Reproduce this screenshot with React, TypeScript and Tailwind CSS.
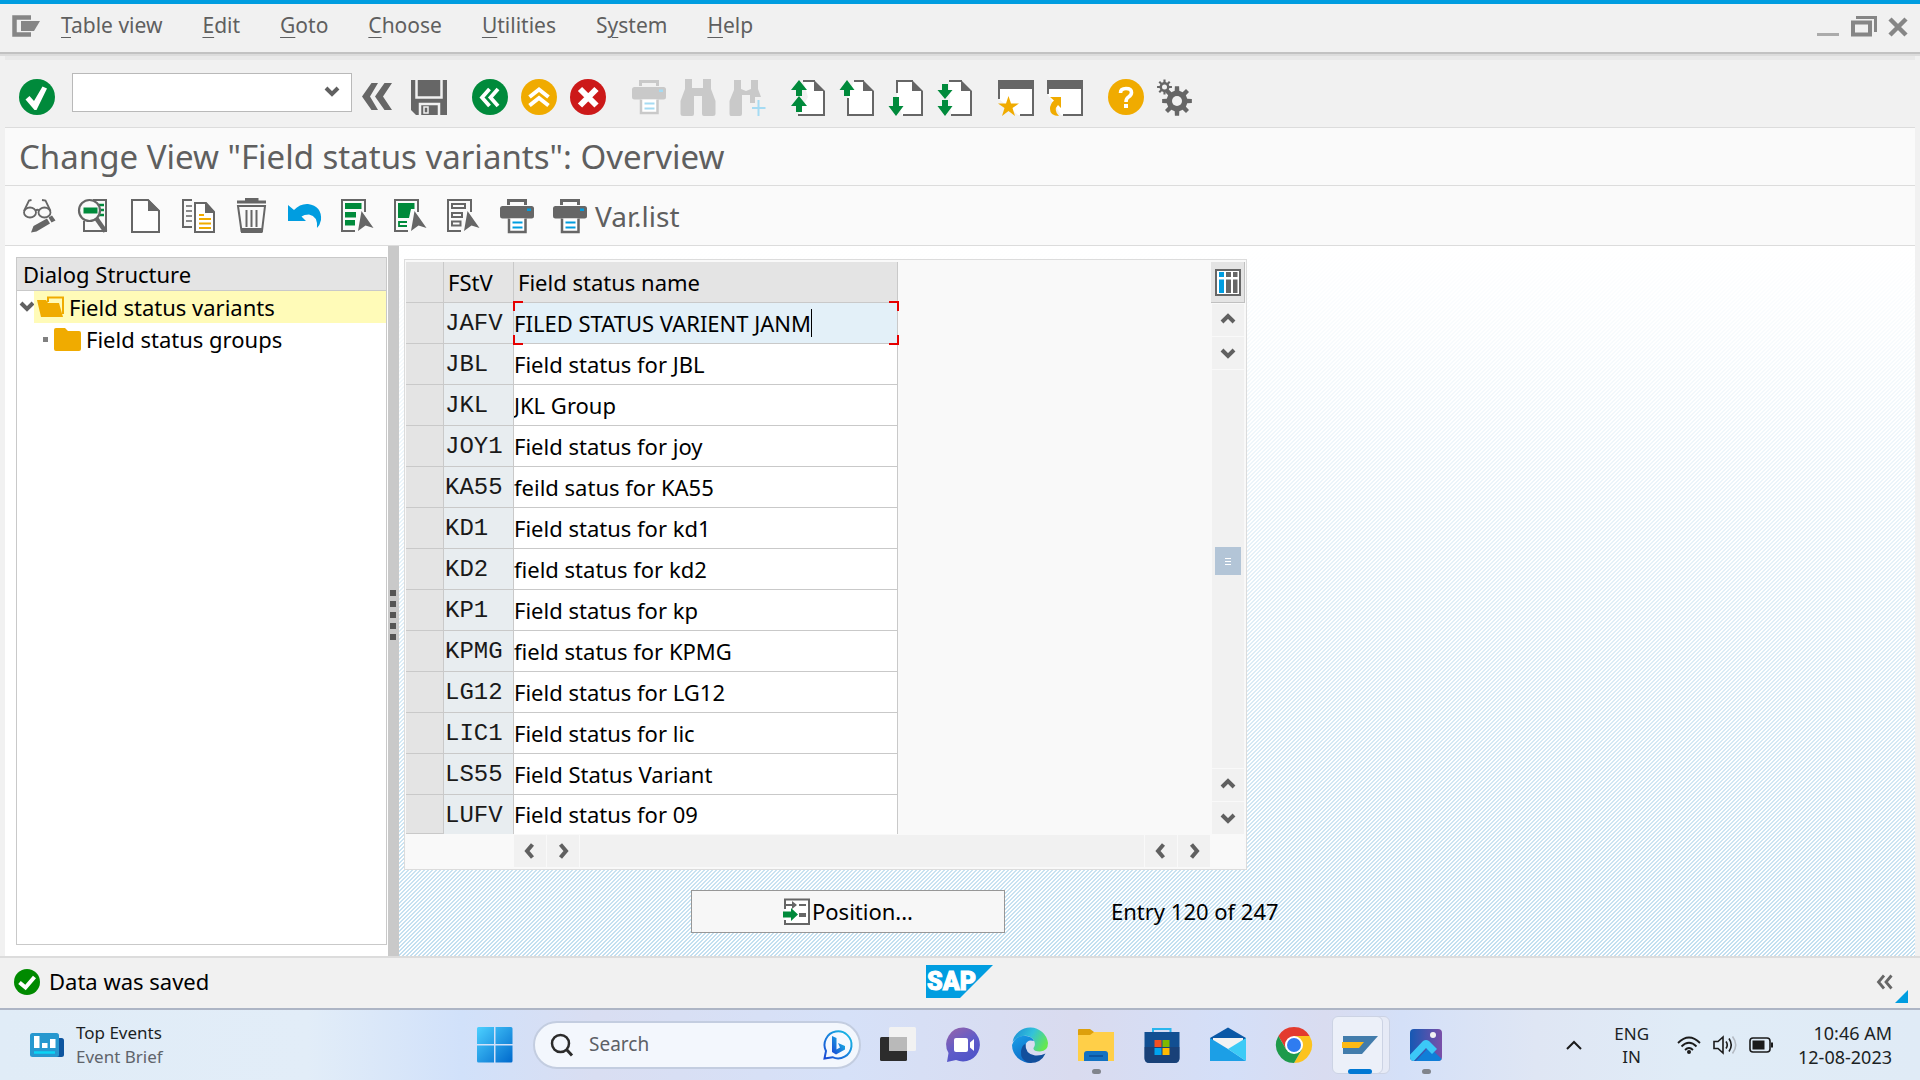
import React from "react";

const GRAY = "#666666";
const GREEN = "#008a3b";
const AMBER = "#f0ab00";
const BLUE = "#009de0";

type KidsProps = { children?: React.ReactNode; w?: number; h?: number };

function Svg({ children, w = 36, h = 36 }: KidsProps) {
  return (
    <svg width={w} height={h} viewBox={`0 0 ${w} ${h}`} className="block shrink-0 overflow-visible" aria-hidden="true">
      {children}
    </svg>
  );
}

function IconButton({ label, children }: { label: string; children: React.ReactNode }) {
  return (
    <button type="button" aria-label={label} className="flex h-9 w-9 shrink-0 items-center justify-center">
      {children}
    </button>
  );
}

/* ---------- icons of the system toolbar ---------- */

function CheckCircle() {
  return (
    <Svg>
      <circle cx="18" cy="18" r="18" fill={GREEN} />
      <path d="M6.5 20.5 L10.5 17 L15 22 L23.5 7.5 L28 9.5 L17.5 31 L15.5 31 Z" fill="#fff" />
    </Svg>
  );
}

function DoubleLeft() {
  return (
    <Svg>
      <path d="M3 17.5 L12.5 4 H19 L11 17.5 L19 31 H12.5 Z M16 17.5 L25.500 4 H33 L24 17.5 L33 31 H25.500 Z" fill={GRAY} />
    </Svg>
  );
}

function Save() {
  return (
    <Svg>
      <path d="M0 1 H36 V36 H5 L0 31 Z" fill={GRAY} />
      <path d="M5.500 1 V18.500 H30.500 V1" fill="none" stroke="#f1f1f1" strokeWidth="2.500" />
      <path d="M9 36 V25 H28 V36" fill="none" stroke="#f1f1f1" strokeWidth="2.500" />
      <rect x="13" y="28" width="4" height="6" fill={GRAY} stroke="#f1f1f1" strokeWidth="1.500" />
    </Svg>
  );
}

function BackCircle() {
  return (
    <Svg>
      <circle cx="18" cy="18" r="18" fill={GREEN} />
      <path d="M17.500 10 L10 18.500 L17.500 27 M26 10 L18.500 18.500 L26 27" fill="none" stroke="#fff" strokeWidth="3.800" />
    </Svg>
  );
}

function UpCircle() {
  return (
    <Svg>
      <circle cx="18" cy="18" r="18" fill={AMBER} />
      <path d="M8.500 18 L18 10.500 L27.500 18 M8.500 26.500 L18 19 L27.500 26.500" fill="none" stroke="#fff" strokeWidth="4" />
    </Svg>
  );
}

function CancelCircle() {
  return (
    <Svg>
      <circle cx="18" cy="18" r="18" fill="#cc1919" />
      <path d="M10 10 L26.500 26.500 M26.500 10 L10 26.500" stroke="#fff" strokeWidth="6" />
    </Svg>
  );
}

function Printer({ dim = false }: { dim?: boolean }) {
  const c = dim ? "#c9c9c9" : GRAY;
  const b = dim ? "#a5dbf3" : BLUE;
  return (
    <Svg>
      <path d="M9.500 7 V2.500 H26.500 V7" fill="none" stroke={c} strokeWidth="3" />
      <rect x="1" y="8" width="34" height="12.500" rx="2.500" fill={c} />
      <rect x="28" y="10.500" width="4" height="2.500" fill={b} />
      <path d="M10 20.500 V34 H26.500 V20.500" fill="#fff" stroke={c} strokeWidth="2.500" />
      <path d="M13.500 24.500 H23.500 M13.500 29.500 H23.500" stroke={b} strokeWidth="2" />
    </Svg>
  );
}

function Binoculars() {
  return (
    <Svg>
      <path d="M5 0 H12 V9 H23 V0 H31 V10 L35.500 22 V35 Q35.500 37 33 37 H24 Q22 37 22 35 V17 H14 V35 Q14 37 12 37 H3 Q0.500 37 0.500 35 V22 L5 10 Z" fill="#c9c9c9" />
    </Svg>
  );
}

function BinocularsPlus() {
  return (
    <Svg>
      <path d="M5 1 H12 V10 L17 12 L22 10 V1 H29 V10 L32 18 H26 V24 H21 V16 H13 V35 Q13 37 11 37 H2 Q0.500 37 0.500 35 V22 L5 11 Z" fill="#c9c9c9" />
      <path d="M29.500 21 V37 M23 29 H36.500" stroke="#a5dbf3" strokeWidth="2" />
    </Svg>
  );
}

function Fold() {
  return <path d="M24 1 L35 12 H24 Z" fill={GRAY} />;
}

function FirstPage() {
  return (
    <Svg>
      <path d="M13 2 H24 L34 12 V36 H8 L18 18 Z" fill="#fff" />
      <path d="M13 2 H25 M34 12 V36 H8" fill="none" stroke={GRAY} strokeWidth="2" />
      <Fold />
      <path d="M9 1 L17 11 H12 V17 H6 V11 H1 Z M9 17 L17 27 H12 V33 H6 V27 H1 Z" fill={GREEN} />
    </Svg>
  );
}

function PrevPage() {
  return (
    <Svg>
      <path d="M15 2 H24 L34 12 V36 H9 V18 Z" fill="#fff" />
      <path d="M15 2 H25 M34 12 V36 H9 V19" fill="none" stroke={GRAY} strokeWidth="2" />
      <Fold />
      <path d="M8 1 L15.500 11 H11 V17 H5 V11 H0.500 Z" fill={GREEN} />
    </Svg>
  );
}

function NextPage() {
  return (
    <Svg>
      <path d="M9 2 H24 L34 12 V36 H14 L9 18 Z" fill="#fff" />
      <path d="M9 14 V2 H25 M34 12 V36 H15" fill="none" stroke={GRAY} strokeWidth="2" />
      <Fold />
      <path d="M8 37 L15.500 27 H11 V18 H5 V27 H0.500 Z" fill={GREEN} />
    </Svg>
  );
}

function LastPage() {
  return (
    <Svg>
      <path d="M12 2 H24 L34 12 V36 H14 Z" fill="#fff" />
      <path d="M12 2 H25 M34 12 V36 H14" fill="none" stroke={GRAY} strokeWidth="2" />
      <Fold />
      <path d="M8 20 L15.500 11 H11 V5 H5 V11 H0.500 Z M8 37 L15.500 27 H11 V21 H5 V27 H0.500 Z" fill={GREEN} />
    </Svg>
  );
}

function NewSession() {
  return (
    <Svg>
      <path d="M1 2 H35 V36 H20 L1 20 Z" fill="#fff" />
      <path d="M1 20 V2 H35 V36 H22" fill="none" stroke={GRAY} strokeWidth="2" />
      <rect x="0" y="1" width="36" height="9" fill={GRAY} />
      <path d="M10.500 17 L13 24.500 H21 L14.500 29 L17 37 L10.500 32 L4 37 L6.500 29 L0 24.500 H8 Z" fill={AMBER} />
    </Svg>
  );
}

function Shortcut() {
  return (
    <Svg>
      <path d="M1 2 H35 V36 H14 L1 16 Z" fill="#fff" />
      <path d="M1 15 V2 H35 V36 H16" fill="none" stroke={GRAY} strokeWidth="2" />
      <rect x="0" y="1" width="36" height="9" fill={GRAY} />
      <path d="M3 18 H14 V29 L11 26 Q6 31 12 37 Q3 37 3 30 Q3 25 7 21.500 Z" fill={AMBER} />
    </Svg>
  );
}

function HelpCircle() {
  return (
    <Svg>
      <circle cx="18" cy="18" r="18" fill={AMBER} />
      <path d="M12.500 14 Q12.500 9.500 18 9.500 Q23.500 9.500 23.500 13.500 Q23.500 16 20.500 18 Q18 19.500 18 23" fill="none" stroke="#fff" strokeWidth="3.600" />
      <rect x="16" y="25" width="4" height="4" fill="#fff" />
    </Svg>
  );
}

function gearPath(cx: number, cy: number, outer: number, inner: number, teeth: number) {
  const pts: string[] = [];
  const step = (Math.PI * 2) / teeth;
  for (let i = 0; i < teeth; i++) {
    const a = i * step - Math.PI / 2;
    const corners: [number, number][] = [
      [a - step * 0.28, inner],
      [a - step * 0.18, outer],
      [a + step * 0.18, outer],
      [a + step * 0.28, inner],
    ];
    for (const [t, r] of corners) pts.push(`${(cx + Math.cos(t) * r).toFixed(2)},${(cy + Math.sin(t) * r).toFixed(2)}`);
  }
  return `M${pts.join(" L")} Z`;
}

function Gears() {
  return (
    <Svg>
      <path d={gearPath(20, 22, 15, 10.5, 8)} fill={GRAY} />
      <circle cx="20" cy="22" r="5" fill="#f1f1f1" />
      <path d={gearPath(7.5, 8, 7.5, 5, 8)} fill={GRAY} />
      <circle cx="7.500" cy="8" r="2.500" fill="#f1f1f1" />
    </Svg>
  );
}

/* ---------- icons of the application toolbar ---------- */

function GlassesPencil() {
  return (
    <Svg>
      <g fill="none" stroke={GRAY} strokeWidth="1.800">
        <ellipse cx="8" cy="14.500" rx="6" ry="5" />
        <ellipse cx="22.500" cy="14.500" rx="6" ry="5" />
        <path d="M13.500 12.500 Q15.500 11 17 12.500 M2 13 L7 2.500 L9.500 2 M28.500 13 L23.500 2.500 L20 2" />
      </g>
      <path d="M9 34.500 L11.500 28 L25 20.500 L28 25.500 L14.500 33.500 Z M26.500 19.500 L30 17.500 L33.500 22.500 L29.500 24.500 Z" fill={GRAY} />
    </Svg>
  );
}

function FindPage() {
  return (
    <Svg>
      <path d="M18 2 H31 V33 H9 V23" fill="none" stroke={GRAY} strokeWidth="2" />
      <path d="M24 7 H29 M25 12 H29 M24 17 H29" stroke={GREEN} strokeWidth="2.500" />
      <circle cx="14.500" cy="12.500" r="10.500" fill="#fafafa" stroke={GRAY} strokeWidth="2.200" />
      <rect x="8.500" y="9.500" width="14" height="6" fill={GREEN} />
      <path d="M21 20 L30.500 33.500" stroke={GRAY} strokeWidth="4.500" />
    </Svg>
  );
}

function NewPage() {
  return (
    <Svg>
      <path d="M4 2 H20 L31 13 V34 H4 Z" fill="#fdfdfd" stroke={GRAY} strokeWidth="2" />
      <path d="M20 1 L32 13 H20 Z" fill={GRAY} />
    </Svg>
  );
}

function CopyPages() {
  return (
    <Svg>
      <path d="M11 2 H2 V29 H11" fill="none" stroke={GRAY} strokeWidth="2" />
      <path d="M5 8 H11 M5 13 H11 M5 18 H11 M5 23 H11" stroke={GRAY} strokeWidth="1.600" />
      <path d="M14 5 H25 L33 14 V34 H14 Z" fill="#fff" stroke={GRAY} strokeWidth="2" />
      <path d="M24 4 L34 15 H24 Z" fill={GRAY} />
      <path d="M18 17 H23 M18 21 H30 M18 25.500 H30 M18 30 H30" stroke={AMBER} strokeWidth="2" />
    </Svg>
  );
}

function Trash() {
  return (
    <Svg>
      <path d="M3 4 H32 M12.500 3 V1.500 H23 V3" fill="none" stroke={GRAY} strokeWidth="3" />
      <path d="M4 8 H31 L28 33 H7.500 Z" fill="none" stroke={GRAY} strokeWidth="2" />
      <path d="M12.500 12 V29 M17.500 12 V29 M22.500 12 V29" stroke={GRAY} strokeWidth="2" />
      <rect x="7" y="30" width="21.500" height="5" fill={GRAY} />
    </Svg>
  );
}

function Undo() {
  return (
    <Svg>
      <path d="M1 7 L7 12 Q13 5.500 21 6 Q35 8 34 22 Q33 27 30 30 Q31 18 22 16.500 Q17 16.500 14.500 18.500 L19 23 H1 Z" fill={BLUE} />
    </Svg>
  );
}

function Cursor() {
  return <path d="M21.500 13 L33.500 30 L25.500 27.500 L18 33 Z" fill={GRAY} />;
}

function SelectAll() {
  return (
    <Svg>
      <path d="M25 14 V2 H2 V33 H15" fill="none" stroke={GRAY} strokeWidth="2" />
      <path d="M5 5 H21.500 V11 H5 Z M5 14 H16 V19.500 H5 Z M5 22 H15 V27.500 H5 Z" fill={GREEN} />
      <Cursor />
    </Svg>
  );
}

function SelectBlock() {
  return (
    <Svg>
      <path d="M25 14 V2 H2 V33 H15" fill="none" stroke={GRAY} strokeWidth="2" />
      <path d="M5 5 H21.500 V11 H18 L16 20 H5 Z" fill={GREEN} />
      <path d="M14 24 H6 V28 H14" fill="none" stroke={GREEN} strokeWidth="1.800" />
      <Cursor />
    </Svg>
  );
}

function DeselectAll() {
  return (
    <Svg>
      <path d="M25 14 V2 H2 V33 H15" fill="none" stroke={GRAY} strokeWidth="2" />
      <path d="M6 6 H19 V10 H6 Z M6 15 H16 V19 H6 Z M6 23.500 H14.500 V27.500 H6 Z" fill="none" stroke={GRAY} strokeWidth="2" />
      <Cursor />
    </Svg>
  );
}

/* ---------- small shared glyphs ---------- */

function Chevron({ dir }: { dir: "up" | "down" | "left" | "right" }) {
  const d = {
    up: "M1 9 L7 3 L13 9",
    down: "M1 4 L7 10 L13 4",
    left: "M9.500 0.500 L4 7 L9.500 13.500",
    right: "M4.500 0.500 L10 7 L4.500 13.500",
  }[dir];
  return (
    <Svg w={14} h={14}>
      <path d={d} fill="none" stroke="#606060" strokeWidth="4" />
    </Svg>
  );
}

function ScrollButton({ dir, label }: { dir: "up" | "down" | "left" | "right"; label: string }) {
  return (
    <button type="button" aria-label={label} className="flex h-8 w-8 shrink-0 items-center justify-center bg-[#f1f1f1]">
      <Chevron dir={dir} />
    </button>
  );
}

/* ---------- data ---------- */

const menus: [string, string, string][] = [
  ["", "T", "able view"],
  ["", "E", "dit"],
  ["", "G", "oto"],
  ["", "C", "hoose"],
  ["", "U", "tilities"],
  ["S", "y", "stem"],
  ["", "H", "elp"],
];

const rows: [string, string][] = [
  ["JAFV", "FILED STATUS VARIENT JANM"],
  ["JBL", "Field status for JBL"],
  ["JKL", "JKL Group"],
  ["JOY1", "Field status for joy"],
  ["KA55", "feild satus for KA55"],
  ["KD1", "Field status for kd1"],
  ["KD2", "field status for kd2"],
  ["KP1", "Field status for kp"],
  ["KPMG", "field status for KPMG"],
  ["LG12", "Field status for LG12"],
  ["LIC1", "Field status for lic"],
  ["LS55", "Field Status Variant"],
  ["LUFV", "Field status for 09"],
];

/* ---------- page sections ---------- */

function MenuBar() {
  return (
    <header className="flex h-12 items-center bg-[#f1f1f1] pr-[13px] pb-1 pl-3">
      <button type="button" aria-label="Window menu">
        <Svg w={28} h={22}>
          <path d="M19 2.500 H2.500 V19.500 H19" fill="none" stroke="#868686" strokeWidth="4.500" />
          <path d="M9 6 H28 L22 16 H9 Z" fill="#868686" />
        </Svg>
      </button>
      <nav className="ml-[21px] flex gap-10 text-[21px] text-[#5f5f5f]">
        {menus.map(([a, b, c]) => (
          <button type="button" key={b + c}>
            {a}
            <span className="underline decoration-1 underline-offset-4">{b}</span>
            {c}
          </button>
        ))}
      </nav>
      <div className="ml-auto flex items-center gap-3">
        <button type="button" aria-label="Minimize">
          <Svg w={22} h={22}>
            <rect x="0" y="18" width="22" height="3" fill="#ababab" />
          </Svg>
        </button>
        <button type="button" aria-label="Restore">
          <Svg w={26} h={22}>
            <path d="M5 2.500 H24.500 V17" fill="none" stroke="#868686" strokeWidth="3" />
            <rect x="2" y="7.500" width="17" height="12" fill="none" stroke="#868686" strokeWidth="4" />
          </Svg>
        </button>
        <button type="button" aria-label="Close" className="pt-0.5">
          <Svg w={18} h={18}>
            <path d="M1 1 L17 17 M17 1 L1 17" stroke="#868686" strokeWidth="4.500" />
          </Svg>
        </button>
      </div>
    </header>
  );
}

function SystemToolbar() {
  return (
    <div className="flex h-[67px] items-center gap-[25px] pt-[7px] pl-[14px]">
      <div className="flex items-center">
        <IconButton label="Enter"><CheckCircle /></IconButton>
        <div className="relative mr-[7px] mb-2.5 ml-[17px] h-[39px] w-[280px] border border-[#b9b9b9] bg-white">
          <input aria-label="Command" className="h-full w-full bg-transparent px-2 pr-9 text-[22px] outline-none" />
          <button type="button" aria-label="Command history" className="absolute top-2.5 right-3">
            <Chevron dir="down" />
          </button>
        </div>
        <IconButton label="Close command field"><DoubleLeft /></IconButton>
        <span className="w-4" />
        <IconButton label="Save"><Save /></IconButton>
      </div>
      <div className="flex gap-[13px]">
        <IconButton label="Back"><BackCircle /></IconButton>
        <IconButton label="Exit"><UpCircle /></IconButton>
        <IconButton label="Cancel"><CancelCircle /></IconButton>
      </div>
      <div className="flex gap-[13px]">
        <IconButton label="Print"><Printer dim /></IconButton>
        <IconButton label="Find"><Binoculars /></IconButton>
        <IconButton label="Find next"><BinocularsPlus /></IconButton>
      </div>
      <div className="flex gap-[13px]">
        <IconButton label="First page"><FirstPage /></IconButton>
        <IconButton label="Previous page"><PrevPage /></IconButton>
        <IconButton label="Next page"><NextPage /></IconButton>
        <IconButton label="Last page"><LastPage /></IconButton>
      </div>
      <div className="flex gap-[13px]">
        <IconButton label="New session"><NewSession /></IconButton>
        <IconButton label="Create shortcut"><Shortcut /></IconButton>
      </div>
      <div className="flex gap-[13px]">
        <IconButton label="Help"><HelpCircle /></IconButton>
        <IconButton label="Customize layout"><Gears /></IconButton>
      </div>
    </div>
  );
}

function AppToolbar() {
  return (
    <div className="flex h-[60px] items-center gap-[17px] border-b border-[#dcdcdc] bg-[#fafafa] pl-[17px]">
      <IconButton label="Display / change"><GlassesPencil /></IconButton>
      <IconButton label="Details"><FindPage /></IconButton>
      <IconButton label="New entries"><NewPage /></IconButton>
      <IconButton label="Copy as"><CopyPages /></IconButton>
      <IconButton label="Delete"><Trash /></IconButton>
      <IconButton label="Undo change"><Undo /></IconButton>
      <IconButton label="Select all"><SelectAll /></IconButton>
      <IconButton label="Select block"><SelectBlock /></IconButton>
      <IconButton label="Deselect all"><DeselectAll /></IconButton>
      <IconButton label="Print"><Printer /></IconButton>
      <button type="button" className="flex items-center gap-[7px] text-[28px] text-[#5f5f5f]">
        <Printer />
        Var.list
      </button>
    </div>
  );
}

function DialogStructure() {
  return (
    <aside className="flex w-[383px] shrink-0 flex-col bg-white pt-[11px] pr-px pb-[11px] pl-[11px] text-[22px]">
      <div className="flex flex-1 flex-col border border-[#c9c9c9]">
        <h2 className="h-[33px] border-b border-[#c9c9c9] bg-[#e4e4e4] pl-1.5 leading-[32px]">Dialog Structure</h2>
        <ul>
          <li className="flex h-8">
            <button type="button" aria-label="Collapse" className="flex w-[17px] shrink-0 justify-end pt-2">
              <Chevron dir="down" />
            </button>
            <button type="button" className="flex flex-1 items-center gap-1 bg-[#fffbb8] pl-[3px]">
              <Svg w={28} h={22}>
                <path d="M11 6 V1.500 H26 V18" fill="none" stroke={AMBER} strokeWidth="2" />
                <path d="M0 4 H9 L11 7 H22 L26 21 H4 Z" fill={AMBER} />
              </Svg>
              Field status variants
            </button>
          </li>
          <li className="flex h-8 items-center pl-[26px]">
            <span className="mr-1.5 h-[5px] w-[5px] bg-[#808080]" />
            <button type="button" className="flex items-center gap-[5px]">
              <Svg w={27} h={23}>
                <path d="M0 2 Q0 0 2 0 H11 L14 3 H25 Q27 3 27 5 V21 Q27 23 25 23 H2 Q0 23 0 21 Z" fill={AMBER} />
              </Svg>
              Field status groups
            </button>
          </li>
        </ul>
      </div>
    </aside>
  );
}

function Splitter() {
  return (
    <div className="flex w-[11px] shrink-0 flex-col items-center justify-center gap-[5px] bg-[#c9c9c9] pt-7 pr-0.5">
      {[0, 1, 2, 3, 4].map((i) => (
        <span key={i} className="h-1.5 w-1.5 bg-[#555555]" />
      ))}
    </div>
  );
}

function VariantTable() {
  return (
    <table className="w-[492px] shrink-0 table-fixed border-separate border-spacing-0 text-left text-[22px]">
      <colgroup>
        <col className="w-[38px]" />
        <col className="w-[70px]" />
        <col />
      </colgroup>
      <thead>
        <tr className="h-[41px] bg-[#e4e4e4]">
          <th aria-label="Select" className="border-r border-b border-[#c9c9c9]" />
          <th className="border-r border-b border-[#c9c9c9] p-0 pl-1 font-normal">FStV</th>
          <th className="border-r border-b border-[#c9c9c9] p-0 pl-1 font-normal">Field status name</th>
        </tr>
      </thead>
      <tbody>
        {rows.map(([code, name], i) => (
          <tr key={code} className="group h-[41px] last:h-[39px]">
            <td className="border-r border-b border-[#c9c9c9] bg-[#e4e4e4] p-0" />
            <td className="border-r border-b border-[#c9c9c9] bg-[#e8edf0] p-0 pt-0.5 pl-px font-['Liberation_Mono',monospace] text-[24px] leading-8 text-[#1a1a1a] group-last:border-b-0">
              {code}
            </td>
            {i === 0 ? (
              <td className="relative border-r border-b border-[#c9c9c9] bg-[#e3f0f8] p-0">
                <span className="absolute -top-0.5 -left-px h-2.5 w-2.5 border-t-2 border-l-2 border-[#e60000]" />
                <span className="absolute -top-0.5 -right-0.5 h-2.5 w-2.5 border-t-2 border-r-2 border-[#e60000]" />
                <span className="absolute -bottom-0.5 -left-px h-2.5 w-2.5 border-b-2 border-l-2 border-[#e60000]" />
                <span className="absolute -right-0.5 -bottom-0.5 h-2.5 w-2.5 border-r-2 border-b-2 border-[#e60000]" />
                <div className="flex items-center">
                  <input aria-label={`Name of ${code}`} defaultValue={name} className="h-8 bg-transparent outline-none [field-sizing:content]" />
                  <span className="h-7 w-px bg-black" />
                </div>
              </td>
            ) : (
              <td className="border-r border-b border-[#c9c9c9] bg-white p-0 group-last:border-b-0">
                <input aria-label={`Name of ${code}`} defaultValue={name} className="block h-8 w-full bg-transparent outline-none" />
              </td>
            )}
          </tr>
        ))}
      </tbody>
    </table>
  );
}

function TablePanel() {
  return (
    <section className="w-[843px] border border-[#dcdcdc] bg-[#f9f9f9] pt-0.5 pb-0.5 pl-px">
      <div className="flex justify-between">
        <VariantTable />
        <div className="mr-px flex flex-col items-center gap-px">
          <button type="button" aria-label="Configuration" className="flex h-[41px] w-[34px] items-center justify-center border-r border-b border-[#c0c0c0] bg-[#e4e4e4]">
            <Svg w={26} h={27}>
              <rect x="1" y="1" width="24" height="25" fill="#fff" stroke={GRAY} strokeWidth="2" />
              <path d="M4 3 H9 V8 H4 Z M4 10.500 H9 V24 H4 Z" fill={BLUE} />
              <path d="M11 3 H16 V8 H11 Z M11 10.500 H16 V24 H11 Z M18 3 H22.500 V8 H18 Z M18 10.500 H22.500 V24 H18 Z" fill={GRAY} />
            </Svg>
          </button>
          <ScrollButton dir="up" label="Page up" />
          <ScrollButton dir="down" label="Scroll down" />
          <div className="flex w-8 flex-1 flex-col items-center bg-[#f1f1f1] pt-[177px]">
            <div className="flex h-7 w-[26px] flex-col items-center justify-center gap-0.5 bg-[#b3c5d7]">
              <span className="h-px w-1.5 bg-white" />
              <span className="h-px w-1.5 bg-white" />
              <span className="h-px w-1.5 bg-white" />
            </div>
          </div>
          <ScrollButton dir="up" label="Scroll up" />
          <ScrollButton dir="down" label="Page down" />
        </div>
      </div>
      <div className="mt-px mr-9 ml-[108px] flex gap-px">
        <ScrollButton dir="left" label="Page left" />
        <ScrollButton dir="right" label="Scroll right" />
        <div className="flex-1 bg-[#f1f1f1]" />
        <ScrollButton dir="left" label="Scroll left" />
        <ScrollButton dir="right" label="Page right" />
      </div>
    </section>
  );
}

function Workspace() {
  return (
    <main className="relative flex-1 bg-[linear-gradient(135deg,#c2dff0_25%,#ffffff_25%,#ffffff_50%,#c2dff0_50%,#c2dff0_75%,#ffffff_75%)] bg-[length:4px_4px]">
      <div className="h-full bg-[linear-gradient(180deg,#ffffff_0%,rgba(255,255,255,0)_100%)] pt-[13px] pl-[5px]">
        <TablePanel />
        <div className="mt-5 flex items-center pl-[287px] text-[22px]">
          <button type="button" className="flex h-[43px] w-[314px] items-center justify-center gap-0.5 border border-[#979797] bg-[#f7f7f7]">
            <Svg w={27} h={28}>
              <path d="M2 11 V1.500 H26 V26 H2 V22" fill="#fff" stroke={GRAY} strokeWidth="2" />
              <path d="M3 7 H13 M16 7 H23 M16 17 H23" fill="none" stroke={GRAY} strokeWidth="2" />
              <path d="M9 3 L14 7 L9 11 Z M16 15 H23 V19 H16 Z" fill={GRAY} />
              <path d="M0 13.500 H8 V10 L15 16.500 L8 23 V19.500 H0 Z" fill={GREEN} />
            </Svg>
            Position...
          </button>
          <p className="ml-[106px]">Entry 120 of 247</p>
        </div>
      </div>
    </main>
  );
}

function StatusBar() {
  return (
    <footer className="relative grid h-[52px] grid-cols-[1fr_auto_1fr] items-center border-t-2 border-[#dcdcdc] bg-[#f1f1f1] pr-[3px] pb-[3px] pl-3.5 text-[22px]">
      <p className="flex items-center gap-[9px]">
        <Svg w={26} h={26}>
          <circle cx="13" cy="13" r="13" fill="#008a00" />
          <path d="M5.500 13.500 L11.500 18.500 L20.500 8" fill="none" stroke="#fff" strokeWidth="4" />
        </Svg>
        Data was saved
      </p>
      <div className="mr-3">
        <Svg w={67} h={33}>
          <path d="M0 0 H67 L34 33 H0 Z" fill={BLUE} />
          <text x="1" y="25" fontFamily="Roboto, sans-serif" fontWeight="900" fontSize="25" fill="#fff" stroke="#fff" strokeWidth="1">
            SAP
          </text>
        </Svg>
      </div>
      <button type="button" aria-label="Show system information" className="mr-6 justify-self-end">
        <Svg w={16} h={14}>
          <path d="M7 0.500 L1.500 7 L7 13.500 M14.500 0.500 L9 7 L14.500 13.500" fill="none" stroke={GRAY} strokeWidth="2.800" />
        </Svg>
      </button>
      <span className="absolute right-3 bottom-[5px] h-[13px] w-[13px] bg-[#009de0] [clip-path:polygon(100%_0,100%_100%,0_100%)]" />
    </footer>
  );
}

/* ---------- desktop taskbar ---------- */

function TaskButton({ label, children, running = false }: { label: string; children: React.ReactNode; running?: boolean }) {
  return (
    <button type="button" aria-label={label} className="relative flex h-[58px] w-14 shrink-0 items-center justify-center">
      {children}
      {running && <span className="absolute bottom-0 h-[5px] w-[9px] rounded-full bg-[#80848c]" />}
    </button>
  );
}

function StartLogo() {
  return (
    <Svg w={36} h={36}>
      <defs>
        <linearGradient id="start" x1="0" y1="0" x2="1" y2="1">
          <stop offset="0" stopColor="#4cd0ff" />
          <stop offset="1" stopColor="#0069cc" />
        </linearGradient>
      </defs>
      <path d="M1.500 0 H17 V17 H0 V1.500 Q0 0 1.500 0 Z M18.500 0 H34 Q35.500 0 35.500 1.500 V17 H18.500 Z M0 18.500 H17 V35.500 H1.500 Q0 35.500 0 34 Z M18.500 18.500 H35.500 V34 Q35.500 35.500 34 35.500 H18.500 Z" fill="url(#start)" />
    </Svg>
  );
}

function BingLogo() {
  return (
    <Svg w={30} h={30}>
      <defs>
        <linearGradient id="bing" x1="1" y1="0" x2="0" y2="1">
          <stop offset="0" stopColor="#19c3e6" />
          <stop offset="1" stopColor="#1a48d4" />
        </linearGradient>
      </defs>
      <path d="M1.500 28.500 L3 21 A13.500 13.500 0 1 1 9.500 27.200 Z" fill="#f5f9ff" stroke="url(#bing)" strokeWidth="2" />
      <path d="M9 6 L13.500 8 V19.500 L17 17.500 L15 13 L22 16 V19.500 L13 24.500 L9 22 Z" fill="url(#bing)" />
    </Svg>
  );
}

function TaskViewIcon() {
  return (
    <Svg>
      <rect x="0" y="10" width="27" height="24" rx="1.500" fill="#2c2c2c" />
      <rect x="9" y="0" width="27" height="24" rx="1.500" fill="#f2f2f2" />
      <path d="M9 10 H27 V24 H10.500 Q9 24 9 22.500 Z" fill="#b9b9b9" />
    </Svg>
  );
}

function ChatIcon() {
  return (
    <Svg>
      <defs>
        <linearGradient id="chat" x1="0" y1="0" x2="0.600" y2="1">
          <stop offset="0" stopColor="#9a64a8" />
          <stop offset="0.600" stopColor="#5f5bc9" />
          <stop offset="1" stopColor="#5054c8" />
        </linearGradient>
      </defs>
      <path d="M18 0.500 A17 17 0 1 1 10 33 L1 35 L2.500 26 A17 17 0 0 1 18 0.500 Z" fill="url(#chat)" />
      <rect x="8" y="11" width="14" height="14" rx="2" fill="#fff" />
      <path d="M24 15.500 L28 12 V24 L24 20.500 Z" fill="#fff" />
    </Svg>
  );
}

function EdgeIcon() {
  return (
    <Svg>
      <defs>
        <linearGradient id="edge-top" x1="0" y1="0.200" x2="1" y2="0.600">
          <stop offset="0" stopColor="#1c8fd6" />
          <stop offset="0.500" stopColor="#33c2da" />
          <stop offset="1" stopColor="#66e84e" />
        </linearGradient>
        <linearGradient id="edge-left" x1="0" y1="0" x2="0.500" y2="1">
          <stop offset="0" stopColor="#1aa0e8" />
          <stop offset="1" stopColor="#0d6cc8" />
        </linearGradient>
      </defs>
      <path d="M0.500 15 A18 18 0 0 1 36 16 Q36 24 28 24.500 Q21 24.500 21.500 21 Q24 18 22 13.500 Q18 8 11 9 Q4 10 0.500 15 Z" fill="url(#edge-top)" />
      <path d="M0 18 Q3 9 12 8.800 Q20 9 22 14 Q15 12 13.500 18 Q12 27 20 35.800 A18 18 0 0 1 0 18 Z" fill="url(#edge-left)" />
      <path d="M13.500 17 Q13 27 23 28.500 Q29 29 33.500 26.500 Q29 36 18.500 36 Q8 34 9 24 Q10 18 13.500 17 Z" fill="#124f9c" />
    </Svg>
  );
}

function FolderIcon() {
  return (
    <Svg>
      <path d="M0 3 Q0 2 1 2 H12 L16 5 H35 Q36 5 36 6 V12 H0 Z" fill="#dda00c" />
      <path d="M0 8 H12 L16 5 H36 V34 H0 Z" fill="#ffcf48" />
      <path d="M6 34 V27 Q6 24 9 24 H27 Q30 24 30 27 V34 Z" fill="#1271c2" />
      <path d="M11 29 H25" stroke="#0b4d94" strokeWidth="1.500" />
    </Svg>
  );
}

function StoreIcon() {
  return (
    <Svg>
      <path d="M9 7 V2 H26.500 V7" fill="none" stroke="#29b6ee" strokeWidth="2" />
      <path d="M0.500 5 H35.500 V31 Q35.500 36 30.500 36 H5.500 Q0.500 36 0.500 31 Z" fill="#114f92" />
      <path d="M0.500 20 H35.500 V31 Q35.500 36 30.500 36 H5.500 Q0.500 36 0.500 31 Z" fill="#1c3c6e" opacity="0.700" />
      <rect x="10.500" y="13" width="7" height="7" fill="#f25022" />
      <rect x="18.500" y="13" width="7" height="7" fill="#7fba00" />
      <rect x="10.500" y="21" width="7" height="7" fill="#00a4ef" />
      <rect x="18.500" y="21" width="7" height="7" fill="#ffb900" />
    </Svg>
  );
}

function MailIcon() {
  return (
    <Svg>
      <path d="M0 11 L18 0.500 L36 11 V16 H0 Z" fill="#0a58a6" />
      <path d="M3 11 H33 V18 L18 25 L3 18 Z" fill="#f3f3f3" />
      <path d="M0 11 L18 22 L36 34 H0 Z" fill="#1c9fe6" />
      <path d="M36 11 L18 22 L36 34 Z" fill="#3ccbf6" />
    </Svg>
  );
}

function ChromeIcon() {
  return (
    <Svg>
      <path d="M2.400 9 A18 18 0 0 1 33.600 9 H18 L10.200 22.500 Z" fill="#e33b2e" />
      <path d="M33.600 9 A18 18 0 0 1 18 36 L25.800 22.500 L18 9 Z" fill="#fcc31e" />
      <path d="M18 36 A18 18 0 0 1 2.400 9 L10.200 22.500 L25.800 22.500 Z" fill="#1e9a4b" />
      <circle cx="18" cy="18" r="9" fill="#fff" />
      <circle cx="18" cy="18" r="7" fill="#2f7cf0" />
    </Svg>
  );
}

function PhotosIcon() {
  return (
    <Svg w={32} h={32}>
      <defs>
        <linearGradient id="photos" x1="0" y1="0.500" x2="1" y2="0.500">
          <stop offset="0" stopColor="#1559b4" />
          <stop offset="1" stopColor="#7a4fa8" />
        </linearGradient>
        <clipPath id="photos-clip">
          <rect width="32" height="32" rx="4" />
        </clipPath>
      </defs>
      <g clipPath="url(#photos-clip)">
        <rect width="32" height="32" fill="url(#photos)" />
        <path d="M4 34 L19 18 L34 32 V34 Z" fill="#0f7ed8" />
        <path d="M-2 28 L13 12 Q16 10 19 12 L27 20 L22 25 L16 19 L2 34 Z" fill="#3cc8f7" />
        <circle cx="23" cy="6" r="3" fill="#f2f2f2" />
      </g>
    </Svg>
  );
}

function Taskbar() {
  return (
    <div className="grid h-[72px] grid-cols-[1fr_auto_1fr] items-center border-t-2 border-[#adb5c5] bg-[linear-gradient(90deg,#e0ecf7_0%,#e2edf8_16%,#d1e1fa_24%,#d9def2_31%,#d6e1f8_44%,#d9dbef_56%,#d4dff8_64%,#d9dcf0_69%,#d4e0f8_73%,#dfe6f4_80%,#e0ecf7_88%,#e0ebf6_100%)] pb-px pl-[11px] font-['Noto_Sans','Open_Sans',sans-serif]">
      <button type="button" className="flex items-center gap-3 justify-self-start pl-[19px] text-left text-[17px] leading-6 text-[#1b1f24]">
        <Svg w={34} h={24}>
          <rect x="18" y="5" width="16" height="19" rx="2.500" fill="#0d559f" />
          <rect x="0" y="0" width="29" height="24" rx="2.500" fill="#2798cf" />
          <path d="M4 3 H9.500 V15 H4 Z M12 10 H17.500 V15 H12 Z M20 6 H25.500 V15 H20 Z" fill="#fff" />
          <path d="M4 19.500 H25" stroke="#0bd4f5" strokeWidth="2.500" />
        </Svg>
        <span>
          Top Events
          <br />
          <span className="text-[#5f646b]">Event Brief</span>
        </span>
      </button>
      <div className="flex items-center">
        <button type="button" aria-label="Start"><StartLogo /></button>
        <label className="mr-[9px] ml-5 flex h-12 w-[328px] items-center rounded-full border-2 border-[#c3cde0] bg-[#f3f7fd] pr-[6px] pl-4">
          <Svg w={22} h={22}>
            <circle cx="9.500" cy="9.500" r="8.500" fill="none" stroke="#2b2b2b" strokeWidth="2.500" />
            <path d="M15.500 15.500 L21 21.500" stroke="#2b2b2b" strokeWidth="3" />
          </Svg>
          <input placeholder="Search" aria-label="Search" className="ml-4 min-w-0 flex-1 bg-transparent text-[19px] outline-none placeholder:text-[#5c6066]" />
          <BingLogo />
        </label>
        <div className="flex gap-2.5">
          <TaskButton label="Task view"><TaskViewIcon /></TaskButton>
          <TaskButton label="Chat"><ChatIcon /></TaskButton>
          <TaskButton label="Edge"><EdgeIcon /></TaskButton>
          <TaskButton label="File Explorer" running><FolderIcon /></TaskButton>
          <TaskButton label="Store"><StoreIcon /></TaskButton>
          <TaskButton label="Mail"><MailIcon /></TaskButton>
          <TaskButton label="Chrome"><ChromeIcon /></TaskButton>
          <TaskButton label="SAP Logon">
            <span className="absolute top-0 -right-0.5 h-[58px] w-12 rounded-md border border-[#ccd3e4] bg-[#e6eaf6]" />
            <span className="absolute inset-y-0 left-0 w-[51px] rounded-md border border-[#ccd3e4] bg-[#ecf0f9]" />
            <span className="relative">
              <Svg w={36} h={18}>
                <path d="M1 0 H36 L20 18 H1 Z" fill="#427cac" />
                <path d="M0 6 H22 L17 12 H0 Z" fill="#fdb913" />
              </Svg>
            </span>
            <span className="absolute bottom-0 h-[5px] w-6 rounded-full bg-[#0078d4]" />
          </TaskButton>
          <TaskButton label="Photos" running><PhotosIcon /></TaskButton>
        </div>
      </div>
      <div className="flex items-center justify-self-end pr-7 text-[17px] leading-[23px] text-[#1b1f24]">
        <button type="button" aria-label="Hidden icons">
          <Svg w={16} h={10}>
            <path d="M1 9 L8 2 L15 9" fill="none" stroke="#1b1b1b" strokeWidth="2" />
          </Svg>
        </button>
        <button type="button" className="ml-8 text-center">
          ENG
          <br />
          IN
        </button>
        <button type="button" aria-label="Network, volume and battery" className="mr-[25px] ml-7 flex items-center gap-3">
          <Svg w={24} h={18}>
            <path d="M1 7 Q12 -4 23 7 M4.500 10.500 Q12 3 19.500 10.500 M8 14 Q12 10 16 14" fill="none" stroke="#1b1b1b" strokeWidth="1.800" />
            <circle cx="12" cy="16" r="2" fill="#1b1b1b" />
          </Svg>
          <Svg w={24} h={20}>
            <path d="M1 6.500 H5 L10 2 V18 L5 13.500 H1 Z M13 6.500 Q15.500 10 13 13.500 M16 3.500 Q20.500 10 16 16.500" fill="none" stroke="#1b1b1b" strokeWidth="1.600" />
            <path d="M19.500 1.500 Q26 10 19.500 18.500" fill="none" stroke="#b4bac2" strokeWidth="1.600" />
          </Svg>
          <Svg w={24} h={16}>
            <rect x="1" y="1" width="20" height="14" rx="3" fill="none" stroke="#1b1b1b" strokeWidth="1.600" />
            <rect x="3.500" y="3.500" width="12" height="9" fill="#1b1b1b" />
            <path d="M22 5.500 H24 V10.500 H22 Z" fill="#1b1b1b" />
          </Svg>
        </button>
        <button type="button" className="text-right text-[18px] leading-6">
          10:46 AM
          <br />
          12-08-2023
        </button>
      </div>
    </div>
  );
}

export default function App() {
  return (
    <div className="flex min-h-screen flex-col bg-[#f1f1f1] font-['Noto_Sans','Open_Sans',sans-serif] text-black">
      <div className="h-1 bg-[#009de0]" />
      <MenuBar />
      <div className="h-1 border-t-2 border-b-2 border-t-[#c2c2c2] border-b-[#dcdcdc]" />
      <div className="mx-[5px] flex flex-1 flex-col">
        <div className="h-1 bg-[#e9e9e9]" />
        <SystemToolbar />
        <h1 className="h-[59px] border-y border-[#dcdcdc] bg-[#fafafa] pl-3.5 text-[33px] leading-[58px] text-[#5f5f5f]">
          Change View "Field status variants": Overview
        </h1>
        <AppToolbar />
        <div className="flex flex-1">
          <DialogStructure />
          <Splitter />
          <div className="flex flex-1 flex-col">
            <Workspace />
          </div>
        </div>
      </div>
      <StatusBar />
      <Taskbar />
    </div>
  );
}
